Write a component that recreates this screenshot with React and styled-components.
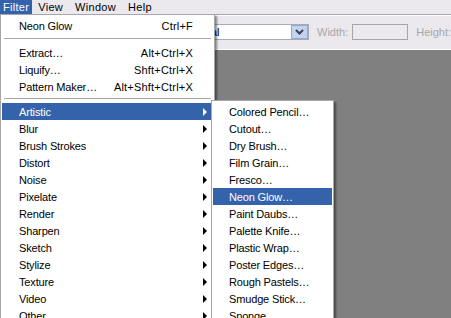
import React from "react";
import styled, { createGlobalStyle } from "styled-components";

const Global = createGlobalStyle`
  html, body { margin: 0; padding: 0; overflow: hidden; }
  body { width: 451px; height: 318px; font-family: "Liberation Sans", Arial, sans-serif; font-size: 11px; }
`;

const Page = styled.div`
  position: relative;
  width: 451px;
  height: 318px;
  display: flex;
  flex-direction: column;
  background: #808080;
  overflow: hidden;
`;

const MenuBar = styled.div`
  height: 14px;
  flex-shrink: 0;
  display: flex;
  align-items: stretch;
  background: #ebe9ed;
  font-size: 11px;
  letter-spacing: 0.3px;
`;

const MenuTitle = styled.div`
  display: flex;
  align-items: center;
  padding: 0 ${(p) => p.$pad}px;
  color: ${(p) => (p.$active ? "#fff" : "#000")};
  background: ${(p) => (p.$active ? "#3462ab" : "transparent")};
  line-height: 14px;
`;

const Toolbar = styled.div`
  height: 34px;
  flex-shrink: 0;
  box-sizing: content-box;
  border-top: 1px solid #a7a6aa;
  box-shadow: inset 0 1px 0 #fff;
  border-bottom: 1px solid #fdfdfd;
  background: #ebe9ed;
  display: flex;
  align-items: center;
  padding-left: 180px;
`;

const SelectField = styled.div`
  flex-shrink: 0;
  width: 124px;
  height: 14px;
  border: 1px solid #a5acb5;
  background: #fff;
  display: flex;
  align-items: center;
  justify-content: space-between;
  padding-left: 3px;
  box-sizing: content-box;
`;

const SelectButton = styled.div`
  width: 15px;
  height: 12px;
  background: #c3d3f2;
  border: 1px solid #9aa8c6;
  display: flex;
  align-items: center;
  justify-content: center;
`;

const Label = styled.span`
  flex-shrink: 0;
  color: #a7a6aa;
  margin-left: ${(p) => p.$ml}px;
  margin-right: ${(p) => p.$mr}px;
`;

const Field = styled.div`
  flex-shrink: 0;
  width: 54px;
  height: 14px;
  border: 1px solid #a7a6aa;
  background: #ebe9ed;
`;

const Canvas = styled.div`
  flex: 1;
  background: #808080;
`;

const Menu = styled.div`
  position: absolute;
  left: ${(p) => p.$left}px;
  top: ${(p) => p.$top}px;
  width: ${(p) => p.$width}px;
  background: #fff;
  border: 1px solid #a7a6aa;
  box-shadow: 2px 2px 2px rgba(0, 0, 0, 0.45);
  padding: 2px 1px 0 1px;
  box-sizing: border-box;
  z-index: ${(p) => p.$z || 1};
  letter-spacing: -0.15px;
`;

const Item = styled.div`
  height: 17px;
  display: flex;
  align-items: center;
  padding-left: ${(p) => p.$pl}px;
  padding-right: ${(p) => p.$pr || 0}px;
  color: ${(p) => (p.$hl ? "#fff" : "#000")};
  background: ${(p) => (p.$hl ? "#3462ab" : "transparent")};
  white-space: nowrap;
`;

const ItemText = styled.span`
  flex: 1;
`;

const Shortcut = styled.span`
  letter-spacing: 0.2px;
`;

const Arrow = styled.span`
  width: 0;
  height: 0;
  border-top: 4px solid transparent;
  border-bottom: 4px solid transparent;
  border-left: 4px solid ${(p) => (p.$hl ? "#fff" : "#000")};
`;

const Separator = styled.div`
  height: 1px;
  background: #a7a6aa;
  margin: ${(p) => p.$mt}px 2px ${(p) => p.$mb}px 2px;
`;

const top = [["Neon Glow", "Ctrl+F"]];
const mid = [
  ["Extract…", "Alt+Ctrl+X"],
  ["Liquify…", "Shft+Ctrl+X"],
  ["Pattern Maker…", "Alt+Shft+Ctrl+X"],
];
const groups = [
  "Artistic", "Blur", "Brush Strokes", "Distort", "Noise", "Pixelate", "Render",
  "Sharpen", "Sketch", "Stylize", "Texture", "Video", "Other",
];
const artistic = [
  "Colored Pencil…", "Cutout…", "Dry Brush…", "Film Grain…", "Fresco…", "Neon Glow…",
  "Paint Daubs…", "Palette Knife…", "Plastic Wrap…", "Poster Edges…", "Rough Pastels…",
  "Smudge Stick…", "Sponge…",
];

export default function App() {
  return (
    <>
      <Global />
      <Page>
        <MenuBar>
          <MenuTitle $active $pad={3}>Filter</MenuTitle>
          <MenuTitle $pad={6}>View</MenuTitle>
          <MenuTitle $pad={6}>Window</MenuTitle>
          <MenuTitle $pad={6}>Help</MenuTitle>
        </MenuBar>
        <Toolbar>
          <SelectField>
            <span>Normal</span>
            <SelectButton>
              <svg width="9" height="6" viewBox="0 0 9 6">
                <path d="M1 1 L4.5 4.5 L8 1" stroke="#3c4250" strokeWidth="2" fill="none" />
              </svg>
            </SelectButton>
          </SelectField>
          <Label $ml={8} $mr={4}>Width:</Label>
          <Field />
          <Label $ml={8} $mr={6}>Height:</Label>
          <Field />
        </Toolbar>
        <Canvas />
        <Menu $left={0} $top={14} $width={215}>
          {top.map(([t, s]) => (
            <Item key={t} $pl={17} $pr={20}>
              <ItemText>{t}</ItemText>
              <Shortcut>{s}</Shortcut>
            </Item>
          ))}
          <Separator $mt={4} $mb={5} />
          {mid.map(([t, s]) => (
            <Item key={t} $pl={17} $pr={20}>
              <ItemText>{t}</ItemText>
              <Shortcut>{s}</Shortcut>
            </Item>
          ))}
          <Separator $mt={3} $mb={4} />
          {groups.map((g, i) => (
            <Item key={g} $pl={17} $pr={6} $hl={i === 0}>
              <ItemText>{g}</ItemText>
              <Arrow $hl={i === 0} />
            </Item>
          ))}
        </Menu>
        <Menu $left={211} $top={100} $width={123} $z={2}>
          {artistic.map((a, i) => (
            <Item key={a} $pl={16} $hl={i === 5}>
              <ItemText>{a}</ItemText>
            </Item>
          ))}
        </Menu>
      </Page>
    </>
  );
}
